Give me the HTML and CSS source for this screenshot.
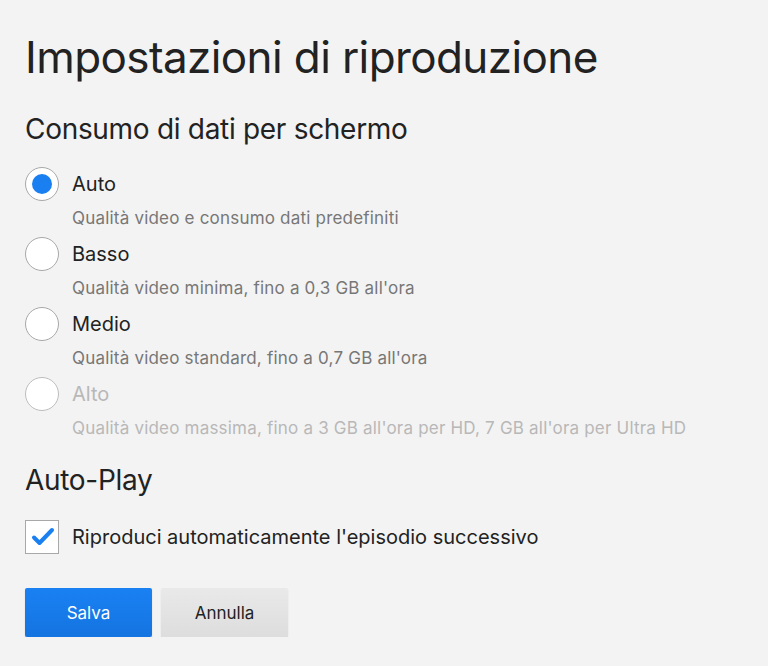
FILE: index.html
```html
<!DOCTYPE html>
<html lang="it">
<head>
    <meta charset="UTF-8">
    <meta name="viewport" content="width=device-width, initial-scale=1.0">
    <title>Impostazioni di riproduzione</title>
    <link rel="stylesheet" href="styles.css">
</head>
<body>
    <div class="settings">
        <h1 class="page-title">Impostazioni di riproduzione</h1>

        <h2 class="section-title">Consumo di dati per schermo</h2>

        <div class="options">
            <label class="option">
                <span class="radio checked"></span>
                <span class="option-text">
                    <span class="option-name">Auto</span>
                    <span class="option-desc">Qualità video e consumo dati predefiniti</span>
                </span>
            </label>

            <label class="option">
                <span class="radio"></span>
                <span class="option-text">
                    <span class="option-name">Basso</span>
                    <span class="option-desc">Qualità video minima, fino a 0,3 GB all'ora</span>
                </span>
            </label>

            <label class="option">
                <span class="radio"></span>
                <span class="option-text">
                    <span class="option-name">Medio</span>
                    <span class="option-desc">Qualità video standard, fino a 0,7 GB all'ora</span>
                </span>
            </label>

            <label class="option disabled">
                <span class="radio"></span>
                <span class="option-text">
                    <span class="option-name">Alto</span>
                    <span class="option-desc">Qualità video massima, fino a 3 GB all'ora per HD, 7 GB all'ora per Ultra HD</span>
                </span>
            </label>
        </div>

        <h2 class="section-title autoplay-title">Auto-Play</h2>

        <label class="check-row">
            <span class="checkbox">
                <svg width="32" height="32" viewBox="0 0 32 32">
                    <path d="M8 16.5 L13.5 22 L26 9" fill="none" stroke="#1a7ff0" stroke-width="4" stroke-linecap="round" stroke-linejoin="round"/>
                </svg>
            </span>
            <span class="check-label">Riproduci automaticamente l'episodio successivo</span>
        </label>

        <div class="actions">
            <button class="btn btn-primary">Salva</button>
            <button class="btn btn-secondary">Annulla</button>
        </div>
    </div>
</body>
</html>
```

FILE: styles.css
```css
body {
    font-family: 'Inter', 'Liberation Sans', sans-serif;
    background-color: #f3f3f3;
    color: #222;
    margin: 0;
}

.settings {
    padding: 29px 25px 0 25px;
}

.page-title {
    font-size: 44px;
    font-weight: 400;
    line-height: 56px;
    letter-spacing: -0.6px;
    margin: 0 0 26px 0;
}

.section-title {
    font-size: 28px;
    font-weight: 400;
    line-height: 36px;
    letter-spacing: -0.3px;
    margin: 0 0 20px 0;
}

.options {
    display: flex;
    flex-direction: column;
}

.option {
    display: flex;
    align-items: flex-start;
    height: 70px;
}

.radio {
    box-sizing: border-box;
    width: 34px;
    height: 34px;
    border: 1px solid #a8a8a8;
    border-radius: 50%;
    background: #fff;
    display: flex;
    align-items: center;
    justify-content: center;
    flex-shrink: 0;
}

.radio.checked::after {
    content: "";
    width: 20px;
    height: 20px;
    border-radius: 50%;
    background: #1a7ff0;
}

.option-text {
    display: flex;
    flex-direction: column;
    margin-left: 13px;
}

.option-name {
    font-size: 20px;
    line-height: 34px;
    color: #222;
}

.option-desc {
    font-size: 17px;
    line-height: 22px;
    letter-spacing: 0.2px;
    margin-top: 6px;
    color: #777;
}

.option.disabled .option-name,
.option.disabled .option-desc {
    color: #b8b8b8;
}

.option.disabled .radio {
    border-color: #bdbdbd;
}

.autoplay-title {
    margin-top: 15px;
    margin-bottom: 22px;
}

.check-row {
    display: flex;
    align-items: center;
}

.checkbox {
    box-sizing: border-box;
    width: 34px;
    height: 34px;
    border: 1px solid #a8a8a8;
    background: #fff;
    display: flex;
    align-items: center;
    justify-content: center;
    flex-shrink: 0;
}

.check-label {
    font-size: 20px;
    margin-left: 13px;
}

.actions {
    display: flex;
    gap: 9px;
    margin-top: 34px;
}

.btn {
    font-family: inherit;
    font-size: 17px;
    width: 127px;
    height: 49px;
    border-radius: 2px;
    border: none;
    cursor: pointer;
}

.btn-primary {
    color: #fff;
    background: linear-gradient(#1a81f3, #1474e0);
    box-shadow: 0 1px 1px rgba(0, 0, 0, 0.3);
}

.btn-secondary {
    color: #222;
    background: linear-gradient(#e9e9e9, #dddddd);
    box-shadow: 0 1px 1px rgba(0, 0, 0, 0.22);
}
```
